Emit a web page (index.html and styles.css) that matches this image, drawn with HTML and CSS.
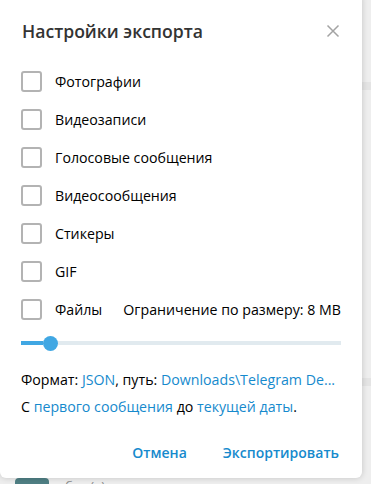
FILE: index.html
```html
<!DOCTYPE html>
<html>
<head lang="ru">
    <meta charset="UTF-8">
    <title>Настройки экспорта</title>
    <link rel="stylesheet" href="styles.css">
</head>
<body>
<div class="page">
    <div class="page-top"></div>
    <div class="page-band"></div>
    <div class="page-mid"></div>
    <div class="page-band"></div>
    <div class="page-row">
        <span class="avatar"></span>
        <span class="status">был(а) недавно</span>
    </div>
</div>

<div class="dialog">
    <div class="head">
        <h1 class="title">Настройки экспорта</h1>
        <svg class="close" width="14" height="14" viewBox="0 0 14 14">
            <path d="M1.5 1.5L12.5 12.5M12.5 1.5L1.5 12.5" stroke="#a3a3a3" stroke-width="1.5" fill="none"/>
        </svg>
    </div>
    <ul class="options">
        <li><span class="box"></span>Фотографии</li>
        <li><span class="box"></span>Видеозаписи</li>
        <li><span class="box"></span>Голосовые сообщения</li>
        <li><span class="box"></span>Видеосообщения</li>
        <li><span class="box"></span>Стикеры</li>
        <li><span class="box"></span>GIF</li>
        <li><span class="box"></span>Файлы<span class="limit">Ограничение по размеру: 8 MB</span></li>
    </ul>
    <div class="slider">
        <div class="fill"></div>
        <div class="thumb"></div>
        <div class="rest"></div>
    </div>
    <p class="info">Формат: <a>JSON</a>, путь: <a>Downloads\Telegram De...</a></p>
    <p class="info">С <a>первого сообщения</a> до <a>текущей даты</a>.</p>
    <div class="buttons">
        <span class="btn">Отмена</span>
        <span class="btn">Экспортировать</span>
    </div>
</div>
</body>
</html>
```

FILE: styles.css
```css
*{
    margin: 0;
    padding: 0;
}
ul{
    list-style: none;
}
body{
    background: #eeeeee;
    font-family: "Open Sans", "DejaVu Sans", sans-serif;
    width: 371px;
    height: 484px;
    overflow: hidden;
    position: relative;
}
.page{
    display: flex;
    flex-direction: column;
    height: 484px;
    overflow: hidden;
}
.page > div{
    flex-shrink: 0;
}
.page-top{
    height: 82px;
}
.page-band{
    height: 8px;
    background: #e4e4e4;
}
.page-mid{
    height: 288px;
}
.page-row{
    display: flex;
    align-items: flex-start;
    gap: 16px;
    padding: 92px 0 0 15px;
}
.avatar{
    width: 34px;
    height: 34px;
    border-radius: 4px;
    background: #4f7f84;
}
.status{
    color: #8a8a8a;
    font-size: 13px;
    line-height: 16px;
}

.dialog{
    position: absolute;
    left: 0;
    top: -6px;
    width: 362px;
    height: 484px;
    background: #ffffff;
    border-radius: 6px;
    box-shadow: 0 0 6px rgba(0, 0, 0, 0.18);
    box-sizing: border-box;
    padding: 6px 21px 0 21px;
}
.head{
    display: flex;
    justify-content: space-between;
    align-items: center;
    height: 62px;
}
.title{
    font-size: 17.6px;
    font-weight: 600;
    color: #333333;
    margin-left: 1px;
}
.close{
    margin-right: 1px;
}
.options li{
    display: flex;
    align-items: center;
    height: 38px;
    font-size: 14.2px;
    color: #000000;
}
.box{
    width: 17px;
    height: 17px;
    border: 2px solid #b3b3b3;
    border-radius: 3px;
    margin-right: 13px;
}
.limit{
    margin-left: auto;
}
.slider{
    display: flex;
    align-items: center;
    height: 16px;
    margin-top: 7px;
}
.fill{
    width: 22px;
    height: 4px;
    background: #40a7e3;
}
.thumb{
    width: 15px;
    height: 15px;
    border-radius: 50%;
    background: #40a7e3;
}
.rest{
    flex: 1;
    height: 4px;
    background: #e1eaef;
}
.info{
    font-size: 14.2px;
    color: #000000;
    line-height: 18px;
}
.slider + .info{
    margin-top: 20px;
}
.info + .info{
    margin-top: 9px;
}
.info a{
    color: #168acd;
}
.buttons{
    display: flex;
    justify-content: flex-end;
    gap: 36px;
    margin-top: 27px;
    padding-right: 2px;
}
.btn{
    color: #168acd;
    font-size: 14px;
    font-weight: 600;
}
```
